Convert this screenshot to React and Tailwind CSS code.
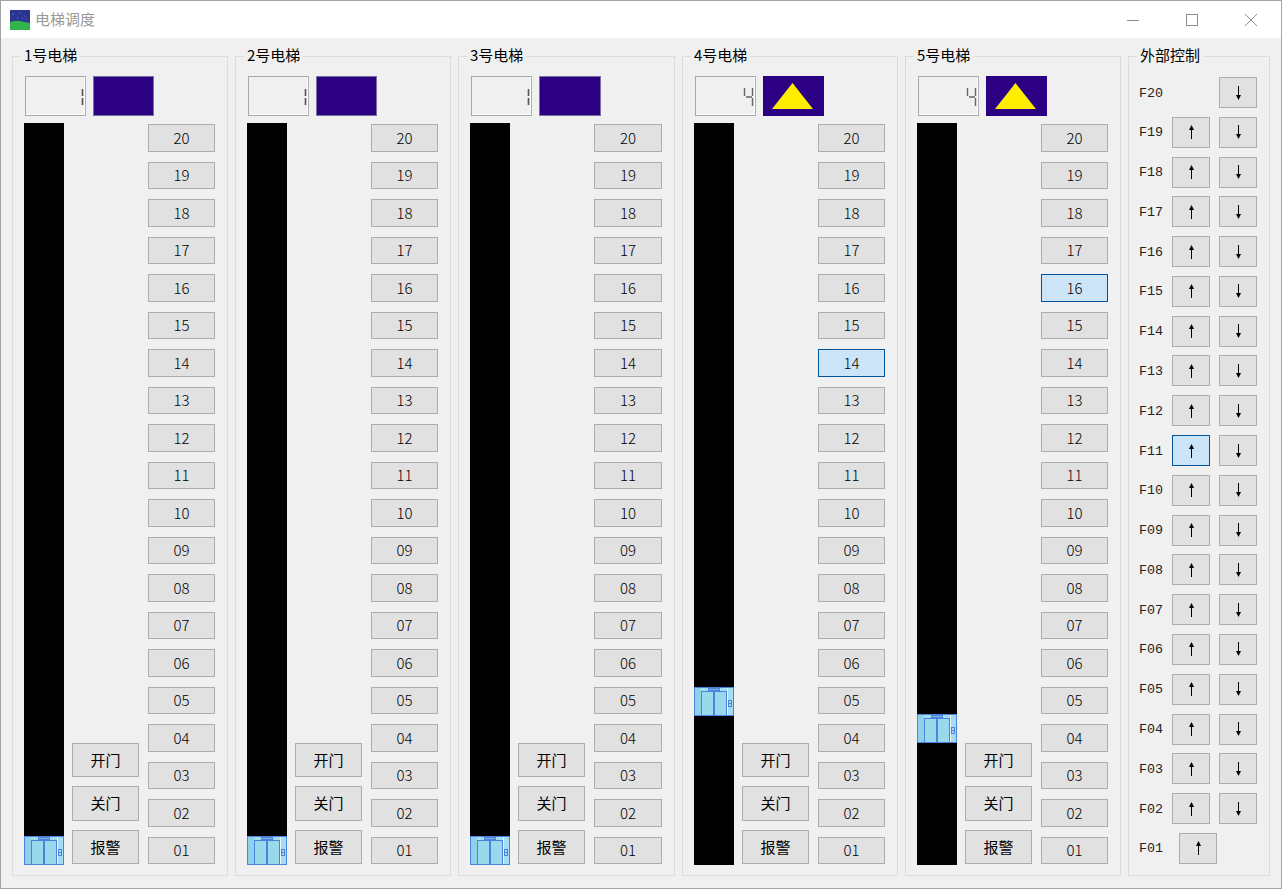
import React from 'react';

const FLOORS = ['20', '19', '18', '17', '16', '15', '14', '13', '12', '11', '10', '09', '08', '07', '06', '05', '04', '03', '02', '01'];
const CJK = "font-['Noto_Sans_CJK_SC',sans-serif]";
const MONO = "font-['Liberation_Mono',monospace]";

const ELEVATORS = [
  { name: '1号电梯', digit: 1, up: false, cabinTop: 713, active: null, width: 'w-[216px]', dirW: 'w-[61px]', floorW: 'w-[67px]' },
  { name: '2号电梯', digit: 1, up: false, cabinTop: 713, active: null, width: 'w-[216px]', dirW: 'w-[61px]', floorW: 'w-[67px]' },
  { name: '3号电梯', digit: 1, up: false, cabinTop: 713, active: null, width: 'w-[217px]', dirW: 'w-[62px]', floorW: 'w-[68px]' },
  { name: '4号电梯', digit: 4, up: true, cabinTop: 564, active: '14', width: 'w-[216px]', dirW: 'w-[61px]', floorW: 'w-[67px]' },
  { name: '5号电梯', digit: 4, up: true, cabinTop: 591, active: '16', width: 'w-[216px]', dirW: 'w-[61px]', floorW: 'w-[67px]' },
];

function btn(active) {
  return active ? 'bg-[#cce4f7] border-[#005499]' : 'bg-[#e1e1e1] border-[#adadad]';
}

function AppIcon() {
  return (
    <svg width="20" height="20" viewBox="0 0 20 20" className="shrink-0">
      <rect width="20" height="20" fill="#2b3490" />
      <path d="M0 12 Q6 10 10 11 T20 13 V20 H0 Z" fill="#2fb34a" />
      <path d="M2 4h2M9 3h1M14 6h1M7 8h1M16 9h1M12 8h1" stroke="#6f76b8" strokeWidth="1" />
    </svg>
  );
}

function Digit({ value }) {
  return (
    <svg width="12" height="20" viewBox="0 0 12 20" className="absolute right-0 top-[10px]">
      {value === 4 ? (
        <g stroke="#666" strokeWidth="1.4" fill="none">
          <path d="M1.5 1v8M3 10h6M9.5 1v8M9.5 11v8" />
        </g>
      ) : (
        <path d="M9.5 2v7M9.5 11v7" stroke="#555" strokeWidth="1.6" />
      )}
    </svg>
  );
}

function Cabin({ top }) {
  return (
    <svg width="40" height="29" viewBox="0 0 40 29" className="absolute left-0" style={{ top }}>
      <rect x="0.5" y="0.5" width="39" height="28" fill="#a6dcf2" stroke="#4a84dc" />
      <rect x="1" y="1" width="6" height="27" fill="#8fd0ea" />
      <rect x="33" y="1" width="1" height="27" fill="#e4f6fc" />
      <rect x="7.5" y="4.5" width="25" height="24" fill="#9ad9ec" stroke="#4a84dc" />
      <rect x="19" y="5" width="2" height="23" fill="#4a84dc" />
      <rect x="14.5" y="1.5" width="11" height="2" fill="#7fb4e6" stroke="#4a84dc" />
      <rect x="34.5" y="13.5" width="3" height="6" fill="#a6dcf2" stroke="#4a84dc" />
      <path d="M34 16.5h4" stroke="#4a84dc" />
    </svg>
  );
}

function Arrow({ down }) {
  return (
    <svg width="7" height="14" viewBox="0 0 7 14" className={down ? 'rotate-180' : ''}>
      <path d="M3.5 0 L6 5 H1 Z" fill="#000" />
      <path d="M3.5 3V14" stroke="#000" strokeWidth="1" />
    </svg>
  );
}

function Group({ title, className, children }) {
  return (
    <div className={`relative border border-[#dcdcdc] h-[820px] ${className}`}>
      <div className={`absolute left-[8px] -top-[12px] bg-[#f0f0f0] px-[3px] text-[15px] leading-[20px] text-black whitespace-nowrap ${CJK}`}>
        {title}
      </div>
      {children}
    </div>
  );
}

function Elevator({ e }) {
  return (
    <Group title={e.name} className={`${e.width} shrink-0 px-[11px] pt-[19px]`}>
      <div className="flex h-[40px] gap-[7px] pl-[1px]">
        <div className="relative w-[61px] border border-[#a8a8a8] border-r-[#b0b0b0]">
          <div className="h-full border-r border-b border-white" />
          <Digit value={e.digit} />
        </div>
        <div className={`${e.dirW} bg-[#2b0082] flex items-center justify-center ${e.up ? '' : 'border border-[#77749a]'}`}>
          {e.up && (
            <svg width="41" height="26" viewBox="0 0 41 26" className="mr-[2px]">
              <path d="M20.5 0 L41 26 H0 Z" fill="#ffee00" />
            </svg>
          )}
        </div>
      </div>
      <div className="flex h-[742px] mt-[7px]">
        <div className="relative w-[40px] bg-black shrink-0">
          <Cabin top={e.cabinTop} />
        </div>
        <div className="ml-[8px] w-[67px] shrink-0 flex flex-col justify-end gap-[9px] pb-[1px]">
          {['开门', '关门', '报警'].map((t) => (
            <div key={t} className={`h-[34.33px] border flex items-center justify-center text-[15px] text-black ${CJK} ${btn(false)}`}>
              {t}
            </div>
          ))}
        </div>
        <div className={`ml-[9px] ${e.floorW} shrink-0 flex flex-col justify-between pt-[1px] pb-[1px]`}>
          {FLOORS.map((f) => (
            <div key={f} className={`h-[27.5px] border flex items-center justify-center text-[15px] font-light text-black ${CJK} ${btn(f === e.active)}`}>
              {f}
            </div>
          ))}
        </div>
      </div>
    </Group>
  );
}

function External() {
  return (
    <Group title="外部控制" className="w-[142px] shrink-0 pl-[10px] pt-[20px]">
      <div className="flex flex-col justify-between h-[787px]">
        {FLOORS.map((f) => {
          const up = f !== '20';
          const down = f !== '01';
          return (
            <div key={f} className="flex h-[31px] items-center">
              <div className={`w-[33px] pt-[2px] text-[13.33px] text-[#222222] ${MONO}`}>F{f}</div>
              {up ? (
                <div className={`w-[38px] h-[31px] border flex items-center justify-center ${f === '01' ? 'ml-[7px]' : ''} ${btn(f === '11')}`}>
                  <Arrow />
                </div>
              ) : (
                <div className="w-[38px]" />
              )}
              {down && (
                <div className={`w-[38px] h-[31px] ml-[9px] border flex items-center justify-center ${btn(false)}`}>
                  <Arrow down />
                </div>
              )}
            </div>
          );
        })}
      </div>
    </Group>
  );
}

export default function App() {
  return (
    <div className="w-[1282px] h-[889px] border border-[#a3a3a3] flex flex-col overflow-hidden bg-[#f0f0f0]">
      <div className="h-[37px] bg-white flex items-center shrink-0 pl-[9px]">
        <AppIcon />
        <div className={`ml-[5px] text-[15px] text-[#999999] ${CJK}`}>电梯调度</div>
        <div className="ml-auto flex items-center">
          <svg width="14" height="14" viewBox="0 0 14 14" className="mr-[45px]">
            <path d="M1 7.5H13" stroke="#8c8c8c" />
          </svg>
          <svg width="14" height="14" viewBox="0 0 14 14" className="mr-[45px]">
            <rect x="1.5" y="1.5" width="11" height="11" fill="none" stroke="#8c8c8c" />
          </svg>
          <svg width="14" height="14" viewBox="0 0 14 14" className="mr-[23px]">
            <path d="M1 1L13 13M13 1L1 13" stroke="#8c8c8c" />
          </svg>
        </div>
      </div>
      <div className="flex gap-[7px] pl-[11px] pt-[18px]">
        {ELEVATORS.map((e) => (
          <Elevator key={e.name} e={e} />
        ))}
        <External />
      </div>
    </div>
  );
}
